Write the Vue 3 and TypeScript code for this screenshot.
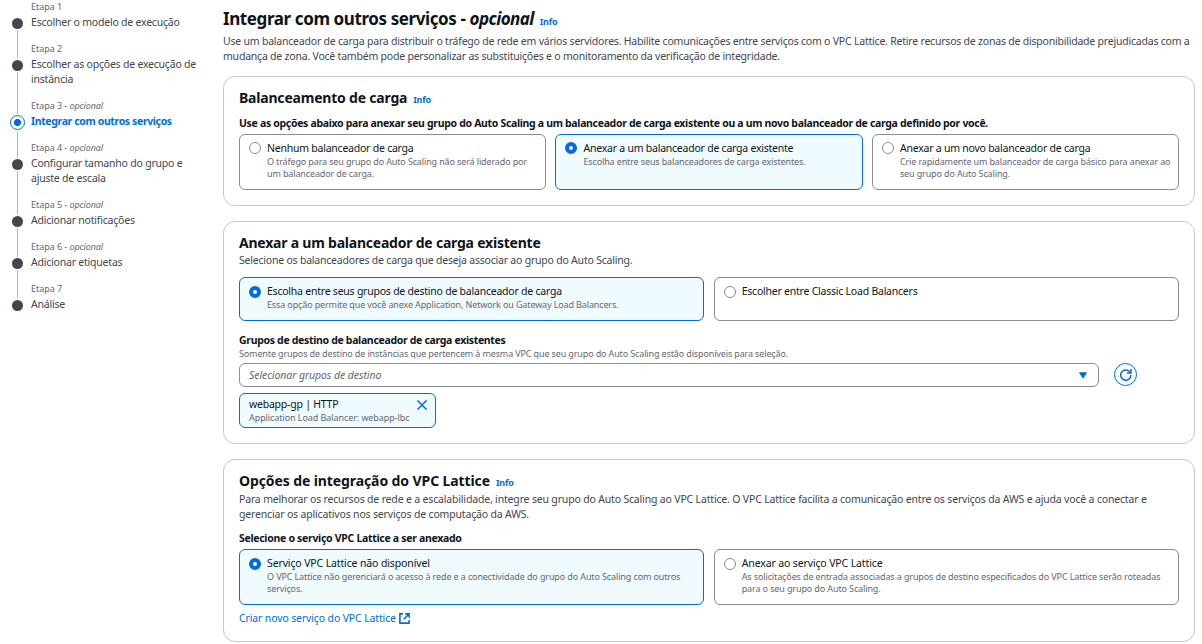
<script setup lang="ts">
import { ref } from 'vue'

interface Step { n: number; optional?: boolean; lines: string[]; active?: boolean }
interface Tile { label: string; desc: string[] }

const steps: Step[] = [
  { n: 1, lines: ['Escolher o modelo de execução'] },
  { n: 2, lines: ['Escolher as opções de execução de', 'instância'] },
  { n: 3, optional: true, lines: ['Integrar com outros serviços'], active: true },
  { n: 4, optional: true, lines: ['Configurar tamanho do grupo e', 'ajuste de escala'] },
  { n: 5, optional: true, lines: ['Adicionar notificações'] },
  { n: 6, optional: true, lines: ['Adicionar etiquetas'] },
  { n: 7, lines: ['Análise'] },
]

const balancing: Tile[] = [
  { label: 'Nenhum balanceador de carga', desc: ['O tráfego para seu grupo do Auto Scaling não será liderado por', 'um balanceador de carga.'] },
  { label: 'Anexar a um balanceador de carga existente', desc: ['Escolha entre seus balanceadores de carga existentes.'] },
  { label: 'Anexar a um novo balanceador de carga', desc: ['Crie rapidamente um balanceador de carga básico para anexar ao', 'seu grupo do Auto Scaling.'] },
]
const attach: Tile[] = [
  { label: 'Escolha entre seus grupos de destino de balanceador de carga', desc: ['Essa opção permite que você anexe Application, Network ou Gateway Load Balancers.'] },
  { label: 'Escolher entre Classic Load Balancers', desc: [] },
]
const lattice: Tile[] = [
  { label: 'Serviço VPC Lattice não disponível', desc: ['O VPC Lattice não gerenciará o acesso à rede e a conectividade do grupo do Auto Scaling com outros', 'serviços.'] },
  { label: 'Anexar ao serviço VPC Lattice', desc: ['As solicitações de entrada associadas a grupos de destino especificados do VPC Lattice serão roteadas', 'para o seu grupo do Auto Scaling.'] },
]

const balancingChoice = ref(1)
const attachChoice = ref(0)
const latticeChoice = ref(0)
const tokenVisible = ref(true)
</script>

<template>
  <div class="page">
    <nav class="steps">
      <div v-for="s in steps" :key="s.n" class="step" :class="{ active: s.active }">
        <div class="rail"><span class="dot"></span><span v-if="s.n < steps.length" class="line"></span></div>
        <div class="step-text">
          <div class="step-no">Etapa {{ s.n }}<template v-if="s.optional"> - <i>opcional</i></template></div>
          <div v-for="l in s.lines" :key="l" class="step-title">{{ l }}</div>
        </div>
      </div>
    </nav>

    <main>
      <header>
        <h1>Integrar com outros serviços - <i>opcional</i></h1>
        <a class="info">Info</a>
      </header>
      <p class="body intro">Use um balanceador de carga para distribuir o tráfego de rede em vários servidores. Habilite comunicações entre serviços com o VPC Lattice. Retire recursos de zonas de disponibilidade prejudicadas com a<br />mudança de zona. Você também pode personalizar as substituições e o monitoramento da verificação de integridade.</p>

      <section class="card balancing">
        <div class="title"><h2 class="t1">Balanceamento de carga</h2><a class="info">Info</a></div>
        <div class="field-label">Use as opções abaixo para anexar seu grupo do Auto Scaling a um balanceador de carga existente ou a um novo balanceador de carga definido por você.</div>
        <div class="tiles">
          <div v-for="(t, i) in balancing" :key="t.label" class="tile" :class="{ on: balancingChoice === i }" @click="balancingChoice = i">
            <span class="radio"></span>
            <div><div class="tile-label">{{ t.label }}</div><div v-for="d in t.desc" :key="d" class="small">{{ d }}</div></div>
          </div>
        </div>
      </section>

      <section class="card attach">
        <div class="title"><h2 class="t2">Anexar a um balanceador de carga existente</h2></div>
        <p class="body">Selecione os balanceadores de carga que deseja associar ao grupo do Auto Scaling.</p>
        <div class="tiles">
          <div v-for="(t, i) in attach" :key="t.label" class="tile" :class="{ on: attachChoice === i }" @click="attachChoice = i">
            <span class="radio"></span>
            <div><div class="tile-label">{{ t.label }}</div><div v-for="d in t.desc" :key="d" class="small">{{ d }}</div></div>
          </div>
        </div>
        <div class="field-label groups">Grupos de destino de balanceador de carga existentes</div>
        <div class="small">Somente grupos de destino de instâncias que pertencem à mesma VPC que seu grupo do Auto Scaling estão disponíveis para seleção.</div>
        <div class="select-row">
          <div class="select">
            <span>Selecionar grupos de destino</span>
            <svg width="8" height="7" viewBox="0 0 8 7"><path d="M.6 .8h6.8L4 6.1z" fill="#006ce0" stroke="#006ce0" stroke-linejoin="round" /></svg>
          </div>
          <button class="refresh" aria-label="Atualizar">
            <svg width="13" height="13" viewBox="0 0 13 13" fill="none" stroke="#006ce0" stroke-width="1.5">
              <path d="M11.9 7.1A5.1 5.1 0 1 1 10.2 3.3L11.6 4.5" /><path d="M12 .9v4H8" />
            </svg>
          </button>
        </div>
        <div v-if="tokenVisible" class="token">
          <div><div class="tile-label">webapp-gp | HTTP</div><div class="small">Application Load Balancer: webapp-lbc</div></div>
          <svg width="10" height="10" viewBox="0 0 10 10" stroke="#006ce0" stroke-width="1.5" @click="tokenVisible = false"><path d="M.4 .4l9.2 9.2M9.6 .4L.4 9.6" /></svg>
        </div>
      </section>

      <section class="card lattice">
        <div class="title"><h2 class="t3">Opções de integração do VPC Lattice</h2><a class="info">Info</a></div>
        <p class="body">Para melhorar os recursos de rede e a escalabilidade, integre seu grupo do Auto Scaling ao VPC Lattice. O VPC Lattice facilita a comunicação entre os serviços da AWS e ajuda você a conectar e<br />gerenciar os aplicativos nos serviços de computação da AWS.</p>
        <div class="field-label">Selecione o serviço VPC Lattice a ser anexado</div>
        <div class="tiles">
          <div v-for="(t, i) in lattice" :key="t.label" class="tile" :class="{ on: latticeChoice === i }" @click="latticeChoice = i">
            <span class="radio"></span>
            <div><div class="tile-label">{{ t.label }}</div><div v-for="d in t.desc" :key="d" class="small">{{ d }}</div></div>
          </div>
        </div>
        <a class="create">Criar novo serviço do VPC Lattice
          <svg width="11" height="11" viewBox="0 0 11 11" fill="none" stroke="#006ce0" stroke-width="1.6"><path d="M4 .9H.9v9.2h9.2V7" /><path d="M6.2 .9h3.9v3.9M10 1L4.7 6.3" /></svg>
        </a>
      </section>
    </main>
  </div>
</template>

<style>
body { background: #fff; overflow: hidden; }
</style>

<style scoped>
.page {
  display: flex;
  height: 644px;
  box-sizing: border-box;
  overflow: hidden;
  font: 10.5px/15px "Noto Sans", "Open Sans", sans-serif;
  letter-spacing: -0.212px;
  color: #0f141a;
  white-space: nowrap;
}
h1, h2, p { margin: 0; }

.steps { width: 213px; padding: 1px 0 0 10px; box-sizing: border-box; flex: none; margin-right: 10px; }
.step { display: flex; }
.rail { width: 15px; margin-right: 6px; display: flex; flex-direction: column; align-items: center; }
.dot { width: 11px; height: 11px; margin-top: 17px; border-radius: 50%; background: #424650; flex: none; }
.line { width: 1px; background: #b4b4bb; flex: 1; margin: 1px 0 -16px; }
.step-text { padding-bottom: 13px; }
.step-no { font-size: 9px; line-height: 12px; letter-spacing: -0.05px; color: #656871; margin-bottom: 2px; }
.step-no i { letter-spacing: -0.1px; }
.step-title { color: #424650; }
.active .step-title { color: #006ce0; font-weight: 700; letter-spacing: -0.37px; }
.active .dot {
  width: 15px; height: 15px; margin-top: 15px; box-sizing: border-box;
  border: 1.5px solid #006ce0; background: radial-gradient(circle, #006ce0 3.2px, #fff 3.9px);
}
.step:has(+ .active) .line { margin-bottom: -14px; }

main { width: 972px; flex: none; }
header { display: flex; align-items: baseline; padding-top: 7px; height: 27px; box-sizing: border-box; }
h1 { font-size: 17px; line-height: 24px; letter-spacing: -0.4px; }
h1 i { letter-spacing: -0.57px; }
.info { font-size: 9px; font-weight: 700; color: #006ce0; margin-left: 6px; letter-spacing: -0.2px; }
.body { color: #424650; }
.intro { padding-top: 7px; height: 49px; box-sizing: border-box; }

.card { box-sizing: border-box; border: 1px solid #c6c6cd; border-radius: 12px; padding: 0 15px; background: #fff; }
.balancing { height: 130px; padding-top: 11px; }
.attach { height: 223px; margin-top: 15px; padding-top: 11px; }
.lattice { height: 183px; margin-top: 15px; padding-top: 11px; }
.title { display: flex; align-items: baseline; height: 20px; }
h2 { font-size: 14px; line-height: 20px; }
.t1 { letter-spacing: -0.2px; }
.t2 { letter-spacing: -0.22px; }
.t3 { letter-spacing: -0.1px; }
.field-label { font-weight: 700; letter-spacing: -0.322px; }
.balancing .field-label { margin-top: 8px; }

.tiles { display: grid; grid-auto-flow: column; grid-auto-columns: 1fr; gap: 9.4px; }
.tile {
  display: flex; box-sizing: border-box; height: 56px; padding: 6px 0 0 9px;
  border: 1px solid #8c8c94; border-radius: 6px; cursor: pointer;
}
.tile.on { border-color: #006ce0; background: #f0fbff; }
.radio { width: 12px; height: 12px; box-sizing: border-box; border: 1.5px solid #8c8c94; border-radius: 50%; margin: 1px 6px 0 0; flex: none; background: #fff; }
.on .radio { border: 4px solid #006ce0; }
.tile-label { color: #0f141a; letter-spacing: -0.23px; }
.small { font-size: 9px; line-height: 12px; letter-spacing: -0.134px; color: #656871; }
.balancing .tiles { margin-top: 3px; }

.attach .tiles { margin-top: 9px; }
.attach .tile { height: 44px; }
.attach .radio, .lattice .radio { margin-top: 2px; }
.groups { margin-top: 12px; }
.select-row { display: flex; gap: 15px; margin-top: 3px; }
.select {
  width: 860px; height: 24px; box-sizing: border-box; border: 1px solid #8c8c94; border-radius: 6px;
  display: flex; align-items: center; justify-content: space-between; padding: 0 11px 0 9px;
  font-style: italic; color: #656871; letter-spacing: -0.08px;
}
.refresh {
  width: 23px; height: 23px; box-sizing: border-box; padding: 0; border: 1px solid #006ce0; border-radius: 50%;
  background: #fff; display: flex; align-items: center; justify-content: center;
}
.token {
  width: 197px; height: 35px; box-sizing: border-box; margin-top: 6px; padding: 3px 8px 0 9px;
  border: 1px solid #006ce0; border-radius: 6px; background: #f0fbff; display: flex; justify-content: space-between;
}
.token svg { margin-top: 3px; }
.token .small { letter-spacing: -0.08px; }

.lattice .body { margin-top: 1px; letter-spacing: -0.172px; }
.lattice .field-label { margin-top: 9px; letter-spacing: -0.3px; }
.lattice .tiles { margin-top: 3px; }
.lattice .tile-label { letter-spacing: -0.13px; }
.lattice .small { letter-spacing: -0.12px; }
.create { color: #006ce0; display: flex; align-items: center; gap: 3px; margin-top: 6px; letter-spacing: -0.135px; }
</style>
